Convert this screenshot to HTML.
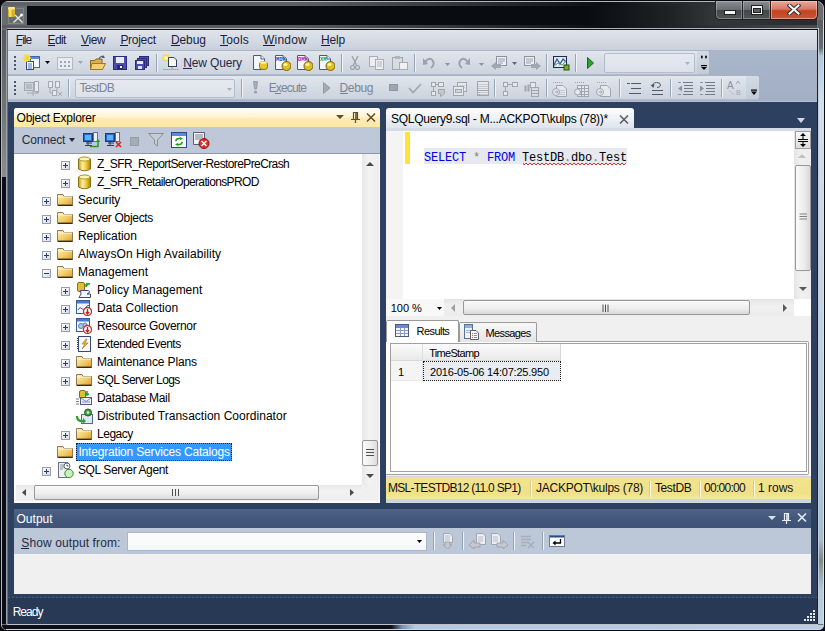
<!DOCTYPE html><html><head><meta charset="utf-8"><style>
html,body{margin:0;padding:0;}
body{width:825px;height:631px;overflow:hidden;position:relative;background:#0b0d12;font-family:"Liberation Sans",sans-serif;}
body div, body span{position:absolute;box-sizing:border-box;}
span{white-space:pre;line-height:1;}
</style></head><body>
<div style="left:0px;top:0px;width:825px;height:631px;background:#06080c;border-radius:8px 8px 6px 6px;"></div>
<div style="left:1px;top:1px;width:823px;height:629px;background:#6a6d70;border-radius:7px 7px 5px 5px;border:1px solid #b4b8bc;"></div>
<div style="left:2px;top:177px;width:4px;height:447px;background:#0b0d1a;"></div>
<div style="left:2px;top:30px;width:4px;height:147px;background:linear-gradient(#55585c,#8a8d90);"></div>
<div style="left:6px;top:30px;width:1px;height:594px;background:#9ca4a8;"></div>
<div style="left:818px;top:20px;width:6px;height:604px;background:linear-gradient(#5a5e63 0,#6a6e72 28px,#b0c8e0 36px,#d0e0f0 80px,#c8d8ea 200px,#b8cce0 400px,#a8bcd0 520px,#7a8c84 540px,#b4c8dc 570px,#bcd0e4);"></div>
<div style="left:818px;top:28px;width:1px;height:596px;background:#c4ccd4;"></div>
<div style="left:823px;top:20px;width:1px;height:604px;background:#d8e0e8;"></div>
<div style="left:824px;top:8px;width:1px;height:618px;background:#0a0c10;"></div>
<div style="left:817px;top:30px;width:1px;height:594px;background:#1a2030;"></div>
<div style="left:2px;top:625px;width:822px;height:5px;background:linear-gradient(90deg,#0b0d1a 0,#0b0d1a 389px,#7890b0 400px,#b4cae2 413px,#b8cce4);border-radius:0 0 5px 5px;"></div>
<div style="left:7px;top:624px;width:811px;height:1px;background:#c0c4c8;"></div>
<div style="left:6px;top:629px;width:813px;height:1px;background:#d0d8e0;"></div>
<div style="left:2px;top:2px;width:815px;height:4px;background:linear-gradient(90deg,#5e6165 0,#5e6165 290px,#0c0e12 600px,#2e3134 700px,#3a3d40 815px);border-radius:6px 0 0 0;"></div>
<div style="left:27px;top:6px;width:790px;height:19px;background:linear-gradient(90deg,#090c11 0,#090c11 560px,#1e2124 640px,#34373a 688px,#2a2d30 790px);"></div>
<div style="left:7px;top:6px;width:20px;height:19px;background:#6a6d70;"></div>
<div style="left:2px;top:25px;width:815px;height:3px;background:linear-gradient(90deg,#5a5e62 0,#5a5e62 290px,#0c0e12 600px,#2a2d30 700px,#4a4d50 815px);"></div>
<div style="left:7px;top:28px;width:811px;height:1px;background:#b0b4b8;"></div>
<div style="left:7px;top:29px;width:811px;height:1px;background:#0e1014;"></div>
<svg style="position:absolute;left:7px;top:6px;" width="18" height="19" viewBox="0 0 18 19" fill="none"><path d="M1.5 8.5 V17.5 H16.5 V2.5 H9" fill="none" stroke="#a8b0a0" stroke-dasharray="1 1" stroke-width="1" opacity=".8"/>
<rect x="1" y="1" width="7" height="10" rx="1.5" fill="#d8b028"/><rect x="1" y="1" width="7" height="2.5" rx="1.2" fill="#f4e890"/><rect x="2" y="3" width="2.5" height="8" fill="#f8e878" opacity=".8"/>
<path d="M6.5 16.5 L15 8.5 M8 9 L15.5 16.5" stroke="#e8ecec" stroke-width="1.2"/><circle cx="14.5" cy="9" r="1.4" fill="#fff"/></svg>
<div style="left:715px;top:1px;width:28px;height:19px;background:linear-gradient(#8a8e92,#6a6e72 48%,#44484c 52%,#50555a);border:1px solid #1e2124;border-top:none;border-radius:0 0 0 5px;box-shadow:inset 0 0 0 1px rgba(255,255,255,.28);"></div>
<div style="left:742px;top:1px;width:29px;height:19px;background:linear-gradient(#8a8e92,#6a6e72 48%,#44484c 52%,#50555a);border:1px solid #1e2124;border-top:none;box-shadow:inset 0 0 0 1px rgba(255,255,255,.28);"></div>
<div style="left:770px;top:1px;width:48px;height:19px;background:linear-gradient(#e8a898,#d77a68 45%,#c8401c 55%,#c05a40);border:1px solid #3a1410;border-top:none;border-radius:0 0 5px 0;box-shadow:inset 0 0 0 1px rgba(255,235,225,.45);"></div>
<div style="left:724px;top:10px;width:12px;height:5px;background:#f4f4f4;border:1px solid #202020;"></div>
<div style="left:751px;top:5px;width:12px;height:10px;border:1px solid #202020;background:#f4f4f4;"></div>
<div style="left:753px;top:8px;width:8px;height:5px;background:#5a5e62;border:1px solid #202020;"></div>
<svg style="position:absolute;left:787px;top:4px;" width="14" height="11" viewBox="0 0 14 11" fill="none"><path d="M2.5 1.5 L11.5 9.5 M11.5 1.5 L2.5 9.5" stroke="#303030" stroke-width="4" stroke-linecap="square"/><path d="M2.5 1.5 L11.5 9.5 M11.5 1.5 L2.5 9.5" stroke="#fafafa" stroke-width="2" stroke-linecap="square"/></svg>
<div style="left:8px;top:30px;width:809px;height:20px;background:linear-gradient(#e0e4eb,#d4dae3 55%,#c8d0dc);"></div>
<div style="left:8px;top:50px;width:809px;height:50px;background:linear-gradient(#aab6ca,#a2afc4);"></div>
<div style="left:8px;top:51px;width:701px;height:23px;background:linear-gradient(#e2e6ed,#d6dce5 50%,#cdd4df);border-radius:0 3px 3px 0;"></div>
<div style="left:8px;top:74px;width:701px;height:1px;background:#b0bbcc;"></div>
<div style="left:14px;top:56px;width:2px;height:2px;background:#4a5670;"></div>
<div style="left:14px;top:60px;width:2px;height:2px;background:#4a5670;"></div>
<div style="left:14px;top:64px;width:2px;height:2px;background:#4a5670;"></div>
<div style="left:14px;top:68px;width:2px;height:2px;background:#4a5670;"></div>
<div style="left:8px;top:76px;width:751px;height:23px;background:linear-gradient(#e2e6ed,#d6dce5 50%,#cdd4df);border-radius:0 3px 3px 0;"></div>
<div style="left:8px;top:99px;width:751px;height:1px;background:#b0bbcc;"></div>
<div style="left:14px;top:81px;width:2px;height:2px;background:#4a5670;"></div>
<div style="left:14px;top:85px;width:2px;height:2px;background:#4a5670;"></div>
<div style="left:14px;top:89px;width:2px;height:2px;background:#4a5670;"></div>
<div style="left:14px;top:93px;width:2px;height:2px;background:#4a5670;"></div>
<div style="left:8px;top:100px;width:809px;height:2px;background:linear-gradient(#a8b2c6 50%,#b4bcd4 50%);"></div>
<div style="left:8px;top:102px;width:809px;height:521px;background:#2e4060;"></div>
<span style="left:15.80px;top:34px;font-size:12px;font-family:'Liberation Sans', sans-serif;color:#1b1d3a;letter-spacing:-0.967px;">File</span>
<div style="left:15.80px;top:45px;width:6.4px;height:1px;background:#1b1d3a"></div>
<span style="left:47.50px;top:34px;font-size:12px;font-family:'Liberation Sans', sans-serif;color:#1b1d3a;letter-spacing:-0.600px;">Edit</span>
<div style="left:47.50px;top:45px;width:7.4px;height:1px;background:#1b1d3a"></div>
<span style="left:81.00px;top:34px;font-size:12px;font-family:'Liberation Sans', sans-serif;color:#1b1d3a;letter-spacing:-0.400px;">View</span>
<div style="left:81.00px;top:45px;width:7.6px;height:1px;background:#1b1d3a"></div>
<span style="left:120.40px;top:34px;font-size:12px;font-family:'Liberation Sans', sans-serif;color:#1b1d3a;letter-spacing:-0.283px;">Project</span>
<div style="left:120.40px;top:45px;width:7.7px;height:1px;background:#1b1d3a"></div>
<span style="left:171.00px;top:34px;font-size:12px;font-family:'Liberation Sans', sans-serif;color:#1b1d3a;letter-spacing:-0.125px;">Debug</span>
<div style="left:171.00px;top:45px;width:8.5px;height:1px;background:#1b1d3a"></div>
<span style="left:220.00px;top:34px;font-size:12px;font-family:'Liberation Sans', sans-serif;color:#1b1d3a;letter-spacing:0.200px;">Tools</span>
<div style="left:220.00px;top:45px;width:7.5px;height:1px;background:#1b1d3a"></div>
<span style="left:263.00px;top:34px;font-size:12px;font-family:'Liberation Sans', sans-serif;color:#1b1d3a;letter-spacing:0.200px;">Window</span>
<div style="left:263.00px;top:45px;width:11.5px;height:1px;background:#1b1d3a"></div>
<span style="left:321.00px;top:34px;font-size:12px;font-family:'Liberation Sans', sans-serif;color:#1b1d3a;letter-spacing:-0.167px;">Help</span>
<div style="left:321.00px;top:45px;width:8.5px;height:1px;background:#1b1d3a"></div>
<svg style="position:absolute;left:23px;top:54px;" width="18" height="17" viewBox="0 0 18 17" fill="none"><rect x="7.5" y="2.5" width="9" height="11" fill="#f4f8fc" stroke="#3c64b0"/><rect x="8" y="3" width="8" height="2" fill="#5a8ad8"/>
<rect x="3.5" y="7.5" width="7" height="8" fill="#fff" stroke="#304a88"/><path d="M5 10h4M5 12h4M5 14h4" stroke="#4a6ab8"/>
<path d="M4 0 L4 8 M0 4 L8 4 M1 1 L7 7 M7 1 L1 7" stroke="#f8d830" stroke-width="1.4"/></svg>
<svg style="position:absolute;left:45px;top:61px;" width="5" height="3" viewBox="0 0 5 3" fill="none"><path d="M0 0 H5 L2.5 3 Z" fill="#000"/></svg>
<svg style="position:absolute;left:57px;top:57px;" width="16" height="13" viewBox="0 0 16 13" fill="none"><rect x="0.5" y="0.5" width="15" height="12" fill="#e8ebf0" stroke="#b4bac4"/><g fill="#a0a6b0"><rect x="3" y="4" width="2" height="2"/><rect x="7" y="4" width="2" height="2"/><rect x="11" y="4" width="2" height="2"/><rect x="3" y="8" width="2" height="2"/><rect x="7" y="8" width="2" height="2"/><rect x="11" y="8" width="2" height="2"/></g></svg>
<svg style="position:absolute;left:78px;top:61px;" width="5" height="3" viewBox="0 0 5 3" fill="none"><path d="M0 0 H5 L2.5 3 Z" fill="#a0a8b4"/></svg>
<svg style="position:absolute;left:90px;top:55px;" width="16" height="16" viewBox="0 0 16 16" fill="none"><path d="M0.5 5.5 H5 L6 4 H12 V14.5 H0.5 Z" fill="#d8b050" stroke="#8a6a20"/><path d="M2 8.5 H15.5 L12.5 14.5 H0.5 Z" fill="#f4d070" stroke="#9a7a28"/>
<path d="M9 4 Q11 0 14 2" stroke="#4a5a80" fill="none" stroke-width="1.3"/><path d="M13 0 L15 3 L12 3 Z" fill="#4a5a80"/></svg>
<svg style="position:absolute;left:113px;top:56px;" width="14" height="14" viewBox="0 0 14 14" fill="none"><rect x="0.5" y="0.5" width="13" height="13" fill="#4c4cb0" stroke="#2a2a78"/><rect x="3" y="1" width="8" height="6" fill="#e8ecf4"/><rect x="4" y="9" width="6" height="4" fill="#2a2a60"/><rect x="7" y="10" width="2" height="2" fill="#fff"/></svg>
<svg style="position:absolute;left:135px;top:56px;" width="14" height="14" viewBox="0 0 14 14" fill="none"><rect x="4.5" y="0.5" width="9" height="9" fill="#5050b8" stroke="#2a2a78"/><rect x="2.5" y="2.5" width="9" height="9" fill="#5050b8" stroke="#2a2a78"/><rect x="0.5" y="4.5" width="9" height="9" fill="#4c4cb0" stroke="#2a2a78"/><rect x="2" y="5" width="6" height="3" fill="#e8ecf4"/><rect x="3" y="10" width="4" height="3" fill="#dfe4f0"/></svg>
<div style="left:156px;top:54px;width:1px;height:18px;background:#97a3b6;"></div>
<div style="left:157px;top:54px;width:1px;height:18px;background:#f2f4f8;"></div>
<svg style="position:absolute;left:162px;top:54px;" width="17" height="17" viewBox="0 0 17 17" fill="none"><path d="M4 0 L4 8 M0 4 L8 4 M1 1 L7 7 M7 1 L1 7" stroke="#f8d830" stroke-width="1.5"/><circle cx="4" cy="4" r="2" fill="#fff8b0"/>
<path d="M6.5 3.5 H12 L14.5 6 V12.5 H6.5 Z" fill="#f8f8fc" stroke="#30405a"/><path d="M6 12.5 H15" stroke="#30405a"/><path d="M10 13 V15" stroke="#d09020"/><path d="M1 15.5 H17" stroke="#d89830" stroke-dasharray="1.5 .5"/></svg>
<span style="left:183.30px;top:57px;font-size:12px;font-family:'Liberation Sans', sans-serif;color:#1e2b45;letter-spacing:-0.150px;">New Query</span>
<div style="left:183.30px;top:68px;width:8.5px;height:1px;background:#1e2b45"></div>
<svg style="position:absolute;left:253px;top:55px;" width="16" height="16" viewBox="0 0 16 16" fill="none"><path d="M0.5 0.5 H8 L11.5 4 V14.5 H0.5 Z" fill="#f4f6fa" stroke="#4a5a78"/><path d="M8 0.5 V4 H11.5" fill="#fff" stroke="#4a5a78"/><rect x="6.5" y="6.5" width="8" height="8" rx="3" fill="#e8c830" stroke="#8a7018"/><ellipse cx="10.5" cy="7.5" rx="3.5" ry="1.3" fill="#fff0a0"/></svg>
<svg style="position:absolute;left:275px;top:55px;" width="16" height="16" viewBox="0 0 16 16" fill="none"><path d="M0.5 0.5 H8 L11.5 4 V14.5 H0.5 Z" fill="#f4f6fa" stroke="#4a5a78"/><path d="M8 0.5 V4 H11.5" fill="#fff" stroke="#4a5a78"/><text x="1" y="6" font-size="5.5" font-family="Liberation Mono" font-weight="bold" fill="#2050c0">MDX</text><ellipse cx="11.5" cy="11" rx="4.5" ry="4.5" fill="#e0c020" stroke="#7a6010"/><ellipse cx="10.5" cy="9.5" rx="2" ry="1.5" fill="#fff6a0"/></svg>
<svg style="position:absolute;left:297px;top:55px;" width="16" height="16" viewBox="0 0 16 16" fill="none"><path d="M0.5 0.5 H8 L11.5 4 V14.5 H0.5 Z" fill="#f4f6fa" stroke="#4a5a78"/><path d="M8 0.5 V4 H11.5" fill="#fff" stroke="#4a5a78"/><text x="1" y="6" font-size="5.5" font-family="Liberation Mono" font-weight="bold" fill="#c020b0">DMX</text><ellipse cx="11.5" cy="11" rx="4.5" ry="4.5" fill="#e0c020" stroke="#7a6010"/><ellipse cx="10.5" cy="9.5" rx="2" ry="1.5" fill="#fff6a0"/></svg>
<svg style="position:absolute;left:319px;top:55px;" width="16" height="16" viewBox="0 0 16 16" fill="none"><path d="M0.5 0.5 H8 L11.5 4 V14.5 H0.5 Z" fill="#f4f6fa" stroke="#4a5a78"/><path d="M8 0.5 V4 H11.5" fill="#fff" stroke="#4a5a78"/><text x="1" y="6" font-size="5.5" font-family="Liberation Mono" font-weight="bold" fill="#20a050">XM</text><ellipse cx="11.5" cy="11" rx="4.5" ry="4.5" fill="#e0c020" stroke="#7a6010"/><ellipse cx="10.5" cy="9.5" rx="2" ry="1.5" fill="#fff6a0"/></svg>
<div style="left:341px;top:54px;width:1px;height:18px;background:#97a3b6;"></div>
<div style="left:342px;top:54px;width:1px;height:18px;background:#f2f4f8;"></div>
<svg style="position:absolute;left:350px;top:56px;" width="10" height="14" viewBox="0 0 10 14" fill="none"><path d="M2 0 L7 10 M8 0 L3 10" stroke="#9aa0aa" stroke-width="1.3"/><circle cx="2.5" cy="11.5" r="2" fill="none" stroke="#9aa0aa" stroke-width="1.2"/><circle cx="7.5" cy="11.5" r="2" fill="none" stroke="#9aa0aa" stroke-width="1.2"/></svg>
<svg style="position:absolute;left:369px;top:56px;" width="16" height="14" viewBox="0 0 16 14" fill="none"><rect x="0.5" y="0.5" width="8" height="10" fill="#eceef2" stroke="#a8aeb8"/><rect x="6.5" y="3.5" width="8" height="10" fill="#eceef2" stroke="#a8aeb8"/><path d="M8 6h5M8 8h5M8 10h5" stroke="#b0b6c0"/></svg>
<svg style="position:absolute;left:392px;top:56px;" width="16" height="14" viewBox="0 0 16 14" fill="none"><rect x="0.5" y="1.5" width="10" height="12" fill="#d8dbe0" stroke="#a0a6b0"/><rect x="3" y="0" width="5" height="3" fill="#b0b6c0"/><rect x="7.5" y="6.5" width="8" height="7" fill="#eef0f4" stroke="#a8aeb8"/></svg>
<div style="left:414px;top:54px;width:1px;height:18px;background:#97a3b6;"></div>
<div style="left:415px;top:54px;width:1px;height:18px;background:#f2f4f8;"></div>
<svg style="position:absolute;left:423px;top:57px;" width="13" height="12" viewBox="0 0 13 12" fill="none"><path d="M2 5 Q7 -1 10 4 Q12 8 8 11" fill="none" stroke="#9aa2ae" stroke-width="2"/><path d="M0 1 L5 7 L0 8 Z" fill="#9aa2ae"/></svg>
<svg style="position:absolute;left:445px;top:63px;" width="5" height="3" viewBox="0 0 5 3" fill="none"><path d="M0 0 H5 L2.5 3 Z" fill="#8a92a0"/></svg>
<svg style="position:absolute;left:458px;top:57px;" width="12" height="12" viewBox="0 0 12 12" fill="none"><path d="M10 5 Q5 -1 2 4 Q0 8 4 11" fill="none" stroke="#9aa2ae" stroke-width="2"/><path d="M12 1 L7 7 L12 8 Z" fill="#9aa2ae"/></svg>
<svg style="position:absolute;left:479px;top:63px;" width="5" height="3" viewBox="0 0 5 3" fill="none"><path d="M0 0 H5 L2.5 3 Z" fill="#8a92a0"/></svg>
<svg style="position:absolute;left:491px;top:56px;" width="17" height="14" viewBox="0 0 17 14" fill="none"><rect x="5.5" y="0.5" width="10" height="9" fill="#eef0f4" stroke="#8a92a0"/><path d="M7 3h7M7 5h7M7 7h5" stroke="#9aa2ae"/><path d="M0 10 L5 6 V8 H10 V12 H5 V14 Z" fill="#a0a8b4"/></svg>
<svg style="position:absolute;left:512px;top:62px;" width="5" height="3" viewBox="0 0 5 3" fill="none"><path d="M0 0 H5 L2.5 3 Z" fill="#606878"/></svg>
<svg style="position:absolute;left:524px;top:56px;" width="17" height="14" viewBox="0 0 17 14" fill="none"><rect x="0.5" y="0.5" width="10" height="9" fill="#eef0f4" stroke="#8a92a0"/><path d="M2 3h7M2 5h7M2 7h5" stroke="#9aa2ae"/><path d="M17 10 L12 6 V8 H7 V12 H12 V14 Z" fill="#a0a8b4"/></svg>
<div style="left:546px;top:54px;width:1px;height:18px;background:#97a3b6;"></div>
<div style="left:547px;top:54px;width:1px;height:18px;background:#f2f4f8;"></div>
<svg style="position:absolute;left:553px;top:56px;" width="17" height="15" viewBox="0 0 17 15" fill="none"><rect x="0.5" y="0.5" width="13" height="11" fill="#d8e4f4" stroke="#1a2a50"/><path d="M1 4h12M1 7h12M4 1v10M8 1v10" stroke="#fff" stroke-width=".6"/><path d="M1 9 L4 3 L7 8 L10 3 L13 6" stroke="#3050a0" fill="none" stroke-width="1.2"/><path d="M1 10 L5 7 L9 9 L13 5" stroke="#60a060" fill="none"/><rect x="11" y="9" width="5" height="5" fill="#70b030" stroke="#305010"/></svg>
<div style="left:575px;top:54px;width:1px;height:18px;background:#97a3b6;"></div>
<div style="left:576px;top:54px;width:1px;height:18px;background:#f2f4f8;"></div>
<svg style="position:absolute;left:587px;top:57px;" width="7" height="12" viewBox="0 0 7 12" fill="none"><path d="M0.5 0.5 L6.5 6 L0.5 11.5 Z" fill="#30a030" stroke="#1a6a1a"/></svg>
<div style="left:604px;top:53px;width:91px;height:20px;background:linear-gradient(#e6e9ef,#dde2ea);border:1px solid #b4bdcc;border-radius:2px;"></div>
<svg style="position:absolute;left:685px;top:62px;" width="5" height="3" viewBox="0 0 5 3" fill="none"><path d="M0 0 H5 L2.5 3 Z" fill="#a8b0bc"/></svg>
<div style="left:697px;top:51px;width:12px;height:23px;background:linear-gradient(#d4dbe5,#c2cbd9);border-radius:0 3px 3px 0;"></div>
<svg style="position:absolute;left:698px;top:54px;" width="12" height="17" viewBox="0 0 12 17" fill="none"><rect x="3" y="1.5" width="1.6" height="3" rx=".8" fill="#000"/><rect x="7.2" y="1.5" width="1.6" height="3" rx=".8" fill="#000"/><rect x="3" y="11" width="6" height="1.2" fill="#000"/><path d="M3 13 H9 L6 16 Z" fill="#000"/></svg>
<svg style="position:absolute;left:24px;top:81px;" width="17" height="16" viewBox="0 0 17 16" fill="none"><rect x="0.5" y="1.5" width="9" height="8" fill="#d0d4da" stroke="#a4aab4"/><rect x="2" y="3" width="6" height="5" fill="#b4bac4"/><rect x="10.5" y="0.5" width="4" height="10" fill="#e8eaee" stroke="#a4aab4"/><path d="M3 12 H15 M9 10 V15 M12 13 L14 11" stroke="#a4aab4"/></svg>
<svg style="position:absolute;left:46px;top:81px;" width="17" height="16" viewBox="0 0 17 16" fill="none"><rect x="2.5" y="0.5" width="4" height="6" fill="#e8eaee" stroke="#a4aab4"/><rect x="9.5" y="0.5" width="4" height="6" fill="#e8eaee" stroke="#a4aab4"/><path d="M4 7 V12 H8 M11 7 V10" stroke="#a4aab4"/><rect x="6.5" y="9.5" width="4" height="5" fill="#e8eaee" stroke="#a4aab4"/><path d="M12 11 L16 15 M16 11 L12 15" stroke="#a4aab4"/></svg>
<div style="left:68px;top:79px;width:1px;height:18px;background:#97a3b6;"></div>
<div style="left:69px;top:79px;width:1px;height:18px;background:#f2f4f8;"></div>
<div style="left:75px;top:79px;width:160px;height:19px;background:linear-gradient(#e6e9ef,#dde2ea);border:1px solid #b4bdcc;border-radius:2px;"></div>
<svg style="position:absolute;left:227px;top:88px;" width="5" height="3" viewBox="0 0 5 3" fill="none"><path d="M0 0 H5 L2.5 3 Z" fill="#a8b0bc"/></svg>
<span style="left:79.60px;top:82px;font-size:12px;font-family:'Liberation Sans', sans-serif;color:#7c8596;letter-spacing:-0.720px;">TestDB</span>
<div style="left:241px;top:79px;width:1px;height:18px;background:#97a3b6;"></div>
<div style="left:242px;top:79px;width:1px;height:18px;background:#f2f4f8;"></div>
<svg style="position:absolute;left:252px;top:81px;" width="7" height="13" viewBox="0 0 7 13" fill="none"><path d="M1.5 0.5 H5.5 L4.5 8 H2.5 Z" fill="#a8aeb8" stroke="#98a0aa"/><circle cx="3.5" cy="11" r="1.6" fill="#98a0aa"/></svg>
<span style="left:268.70px;top:82px;font-size:12px;font-family:'Liberation Sans', sans-serif;color:#7c8596;letter-spacing:-0.867px;">Execute</span>
<div style="left:275px;top:93px;width:6px;height:1px;background:#7c8596"></div>
<svg style="position:absolute;left:323px;top:82px;" width="8" height="12" viewBox="0 0 8 12" fill="none"><path d="M0.5 0.5 L7 6 L0.5 11.5 Z" fill="#a4aab4" stroke="#949aa6"/></svg>
<span style="left:339.60px;top:82px;font-size:12px;font-family:'Liberation Sans', sans-serif;color:#7c8596;letter-spacing:-0.400px;">Debug</span>
<div style="left:339.60px;top:93px;width:8.3px;height:1px;background:#7c8596"></div>
<div style="left:389px;top:84px;width:9px;height:7px;background:#a0a6b0;border:1px solid #9098a4;"></div>
<svg style="position:absolute;left:408px;top:83px;" width="14" height="11" viewBox="0 0 14 11" fill="none"><path d="M1 5 L5 9.5 L13 1" stroke="#a0a6b0" stroke-width="1.6" fill="none"/></svg>
<svg style="position:absolute;left:430px;top:81px;" width="17" height="16" viewBox="0 0 17 16" fill="none"><rect x="1.5" y="1.5" width="4" height="4" fill="#e6e8ec" stroke="#a0a6b0"/><rect x="8.5" y="1.5" width="5" height="4" fill="#e6e8ec" stroke="#a0a6b0"/><rect x="1.5" y="10.5" width="4" height="4" fill="#e6e8ec" stroke="#a0a6b0"/><path d="M3.5 6v4M6 3.5h2" stroke="#a0a6b0"/><path d="M8.5 8.5 H14.5 V12.5 L10.5 15.5 V12.5 H8.5 Z" fill="#c4c8d0" stroke="#a0a6b0"/></svg>
<svg style="position:absolute;left:452px;top:81px;" width="17" height="16" viewBox="0 0 17 16" fill="none"><rect x="5.5" y="1.5" width="9" height="9" fill="#e6e8ec" stroke="#a0a6b0"/><path d="M7 4.5h6M7 6.5h6" stroke="#c8ccd4"/><rect x="1.5" y="5.5" width="10" height="9" fill="#e6e8ec" stroke="#a0a6b0"/><rect x="3.5" y="8.5" width="6" height="3" fill="#d4d8de" stroke="#a0a6b0"/></svg>
<svg style="position:absolute;left:476px;top:81px;" width="17" height="16" viewBox="0 0 17 16" fill="none"><rect x="1.5" y=".5" width="11" height="14" fill="#e6e8ec" stroke="#a0a6b0"/><path d="M2 3.5h10M2 5.5h10M2 7.5h10M2 9.5h10M2 11.5h10M2 13.5h10" stroke="#c4c8d0"/><path d="M2 9.5h10" stroke="#a0a6b0"/><path d="M3 11.5h1M3 13.5h1" stroke="#a0a6b0"/></svg>
<div style="left:494px;top:79px;width:1px;height:18px;background:#97a3b6;"></div>
<div style="left:495px;top:79px;width:1px;height:18px;background:#f2f4f8;"></div>
<svg style="position:absolute;left:502px;top:81px;" width="17" height="16" viewBox="0 0 17 16" fill="none"><rect x="1.5" y="1.5" width="4" height="4" fill="#e6e8ec" stroke="#a0a6b0"/><rect x="10.5" y="1.5" width="5" height="4" fill="#e6e8ec" stroke="#a0a6b0"/><rect x="1.5" y="10.5" width="4" height="4" fill="#e6e8ec" stroke="#a0a6b0"/><path d="M3.5 6v4M6 3.5h4" stroke="#a0a6b0"/></svg>
<svg style="position:absolute;left:523px;top:81px;" width="17" height="16" viewBox="0 0 17 16" fill="none"><rect x="1.5" y="4.5" width="2" height="6" fill="#a0a6b0"/><rect x="4.5" y="3.5" width="2" height="7" fill="#a0a6b0"/><rect x="7.5" y="1.5" width="5" height="5" fill="#e6e8ec" stroke="#a0a6b0"/><rect x="8.5" y="6.5" width="7" height="9" fill="#d8dce2" stroke="#a0a6b0"/><path d="M9 9.5h6M9 12.5h6" stroke="#a0a6b0"/></svg>
<div style="left:546px;top:79px;width:1px;height:18px;background:#97a3b6;"></div>
<div style="left:547px;top:79px;width:1px;height:18px;background:#f2f4f8;"></div>
<svg style="position:absolute;left:552px;top:81px;" width="17" height="16" viewBox="0 0 17 16" fill="none"><path d="M1 1.5h1M3 1.5h1M5 1.5h1M7 1.5h1M9 1.5h1" stroke="#a0a6b0"/><path d="M4.5 4.5 H11 L14.5 8 V15.5 H4.5 Z" fill="#e6e8ec" stroke="#a0a6b0"/><path d="M6 9.5h7M6 11.5h7M6 13.5h7" stroke="#c4c8d0"/><circle cx="4" cy="11" r="3.5" fill="#e6e8ec" stroke="#a0a6b0"/><path d="M2.5 11 H5.5 M4.5 9.5 L6 11 L4.5 12.5" stroke="#a0a6b0" fill="none"/></svg>
<svg style="position:absolute;left:574px;top:81px;" width="17" height="16" viewBox="0 0 17 16" fill="none"><path d="M1 1.5h1M3 1.5h1M5 1.5h1M7 1.5h1M9 1.5h1" stroke="#a0a6b0"/><rect x="3.5" y="4.5" width="11" height="11" fill="#e6e8ec" stroke="#a0a6b0"/><path d="M4 7.5h10M4 10.5h10M4 13.5h10M7.5 5v10M10.5 5v10" stroke="#a0a6b0"/><circle cx="3.5" cy="11" r="3" fill="#e6e8ec" stroke="#a0a6b0"/></svg>
<svg style="position:absolute;left:596px;top:81px;" width="17" height="16" viewBox="0 0 17 16" fill="none"><path d="M1 1.5h1M3 1.5h1M5 1.5h1M7 1.5h1M9 1.5h1" stroke="#a0a6b0"/><path d="M4.5 4.5 H11 L14.5 8 V15.5 H4.5 Z" fill="#e6e8ec" stroke="#a0a6b0"/><circle cx="4" cy="11" r="3.5" fill="#e6e8ec" stroke="#a0a6b0"/><path d="M2.5 11 H5.5 M4.5 9.5 L6 11 L4.5 12.5" stroke="#a0a6b0" fill="none"/></svg>
<div style="left:619px;top:79px;width:1px;height:18px;background:#97a3b6;"></div>
<div style="left:620px;top:79px;width:1px;height:18px;background:#f2f4f8;"></div>
<svg style="position:absolute;left:626px;top:81px;" width="17" height="16" viewBox="0 0 17 16" fill="none"><path d="M1 2.5h3M5 2.5h10M5 7.5h10M3 12.5h12" stroke="#505a6a"/></svg>
<svg style="position:absolute;left:649px;top:81px;" width="17" height="16" viewBox="0 0 17 16" fill="none"><path d="M4 6 Q3 1.5 7.5 1.5 Q11.5 1.5 11.5 4 Q11.5 6.5 8 6.5" fill="none" stroke="#505a6a"/><path d="M1.5 4 L4.5 7 L5.5 3Z" fill="#505a6a"/><path d="M3 9.5h11M3 13.5h11" stroke="#505a6a"/></svg>
<div style="left:670px;top:79px;width:1px;height:18px;background:#97a3b6;"></div>
<div style="left:671px;top:79px;width:1px;height:18px;background:#f2f4f8;"></div>
<svg style="position:absolute;left:677px;top:81px;" width="17" height="16" viewBox="0 0 17 16" fill="none"><path d="M6 1.5h10M7 4.5h9M7 7.5h9M7 10.5h9M6 13.5h10" stroke="#707a8a" stroke-width="1.2"/><path d="M1 1.5h3M1 13.5h3" stroke="#8a94a4"/><path d="M1 7.5 L5 4.5 V10.5Z" fill="#8a94a4"/></svg>
<svg style="position:absolute;left:699px;top:81px;" width="17" height="16" viewBox="0 0 17 16" fill="none"><path d="M6 1.5h10M7 4.5h9M7 7.5h9M7 10.5h9M6 13.5h10" stroke="#707a8a" stroke-width="1.2"/><path d="M1 1.5h3M1 13.5h3" stroke="#8a94a4"/><path d="M5 7.5 L1 4.5 V10.5Z" fill="#8a94a4"/></svg>
<div style="left:721px;top:79px;width:1px;height:18px;background:#97a3b6;"></div>
<div style="left:722px;top:79px;width:1px;height:18px;background:#f2f4f8;"></div>
<svg style="position:absolute;left:727px;top:80px;" width="17" height="16" viewBox="0 0 17 16" fill="none"><text x="0" y="9" font-size="10" fill="#8a92a0" font-family="Liberation Sans">A</text><path d="M9 4 L11 1 L13 4" stroke="#a0a6b0" fill="none"/><text x="9" y="15" font-size="7" fill="#a0a6b0" font-family="Liberation Sans">B</text><path d="M3 11 Q4 14 8 14" stroke="#a0a6b0" fill="none" stroke-dasharray="1 1"/></svg>
<div style="left:746px;top:76px;width:13px;height:23px;background:linear-gradient(#d4dbe5,#c2cbd9);border-radius:0 3px 3px 0;"></div>
<svg style="position:absolute;left:750px;top:88px;" width="8" height="9" viewBox="0 0 8 9" fill="none"><rect x="1" y="1.5" width="6" height="1.2" fill="#000"/><path d="M1 3.5 H7 L4 7 Z" fill="#000"/></svg>
<div style="left:14px;top:108px;width:366px;height:395px;background:#fdfdfd;border-radius:3px 3px 0 0;"></div>
<div style="left:14px;top:127px;width:366px;height:26px;background:#bec8d8;"></div>
<div style="left:14px;top:153px;width:366px;height:1px;background:#8e98a8;"></div>
<div style="left:14px;top:108px;width:366px;height:19px;background:linear-gradient(#fffdf6,#fff5d6 45%,#ffeab0 55%,#ffe8a8);border-radius:3px 3px 0 0;"></div>
<span style="left:16.60px;top:112px;font-size:12px;font-family:'Liberation Sans', sans-serif;color:#000;letter-spacing:-0.257px;">Object Explorer</span>
<svg style="position:absolute;left:336px;top:115px;" width="8" height="4" viewBox="0 0 8 4" fill="none"><path d="M0 0 H8 L4 4 Z" fill="#5a502a"/></svg>
<svg style="position:absolute;left:351px;top:112px;" width="9" height="11" viewBox="0 0 9 11" fill="none"><path d="M2.5 .5 H6.5 V7.5 H2.5 Z" fill="none" stroke="#5a502a" stroke-width="1.2"/><path d="M5 1 V7" stroke="#5a502a" stroke-width="1.6"/><path d="M0 7.5 H9 M4.5 8 V11" stroke="#5a502a" stroke-width="1.2"/></svg>
<svg style="position:absolute;left:366px;top:113px;" width="10" height="9" viewBox="0 0 10 9" fill="none"><path d="M1 .5 L9 8.5 M9 .5 L1 8.5" stroke="#5a502a" stroke-width="1.5"/></svg>
<span style="left:21.80px;top:134px;font-size:12px;font-family:'Liberation Sans', sans-serif;color:#1e2b45;letter-spacing:-0.200px;">Connect</span>
<svg style="position:absolute;left:69px;top:138px;" width="6" height="4" viewBox="0 0 6 4" fill="none"><path d="M0 0 H6 L3 4 Z" fill="#1e2b45"/></svg>
<svg style="position:absolute;left:83px;top:132px;" width="17" height="16" viewBox="0 0 17 16" fill="none"><rect x=".5" y="1.5" width="9" height="8" fill="#1e6ad0" stroke="#1a3a80"/><rect x="2" y="3" width="6" height="5" fill="#60b0ff"/><rect x="10.5" y=".5" width="4" height="9" fill="#f0f0f4" stroke="#6a7080"/><path d="M3 11 H9 M5 10 V13 M2 13.5 H9" stroke="#303848"/><path d="M7 14.5 H15 V9" stroke="#20a020" stroke-width="1.5" fill="none"/><path d="M12.5 10 L15 7 L17.5 10 Z" fill="#20a020"/></svg>
<svg style="position:absolute;left:105px;top:132px;" width="17" height="16" viewBox="0 0 17 16" fill="none"><rect x=".5" y="1.5" width="9" height="8" fill="#1e6ad0" stroke="#1a3a80"/><rect x="2" y="3" width="6" height="5" fill="#60b0ff"/><rect x="10.5" y=".5" width="4" height="9" fill="#f0f0f4" stroke="#6a7080"/><path d="M3 11 H9 M5 10 V13 M2 13.5 H9" stroke="#303848"/><path d="M11 10 L16 15 M16 10 L11 15" stroke="#e02020" stroke-width="1.6"/></svg>
<div style="left:130px;top:137px;width:9px;height:9px;background:#a6acb6;border:1px solid #969ca6;"></div>
<svg style="position:absolute;left:148px;top:133px;" width="16" height="14" viewBox="0 0 16 14" fill="none"><path d="M0.5 .5 H15.5 L9.5 7 V13 L6.5 11 V7 Z" fill="#c8ccd4" stroke="#8a909a"/></svg>
<svg style="position:absolute;left:171px;top:132px;" width="16" height="16" viewBox="0 0 16 16" fill="none"><rect x=".5" y=".5" width="15" height="15" fill="#fff" stroke="#2a4a90"/><rect x="1" y="1" width="14" height="3" fill="#5a8ad8"/><path d="M4 9 Q5 5 9 6 L8 4.5 L12 6.5 L8.5 8.5 L9 7 Q6 7 5.5 9.5 Z" fill="#20a020"/><path d="M12 10 Q11 14 7 13 L8 14.5 L4 12.5 L7.5 10.5 L7 12 Q10 12 10.5 9.5Z" fill="#20a020"/></svg>
<svg style="position:absolute;left:193px;top:132px;" width="17" height="17" viewBox="0 0 17 17" fill="none"><path d="M.5 .5 H11.5 V12.5 H.5 Z" fill="#f4f4f8" stroke="#5a6070"/><path d="M2 3h8M2 5h8M2 7h6" stroke="#7a8090"/><circle cx="11" cy="11.5" r="5" fill="#e03030" stroke="#901010"/><path d="M8.5 9 L13.5 14 M13.5 9 L8.5 14" stroke="#fff" stroke-width="1.4"/></svg>
<div style="left:15px;top:154px;width:347px;height:330px;background:#fff;"></div>
<div style="left:362px;top:154px;width:17px;height:331px;background:linear-gradient(90deg,#e8e8e8,#f2f2f2 40%,#eeeeee);"></div>
<svg style="position:absolute;left:366px;top:162px;" width="8" height="4" viewBox="0 0 8 4" fill="none"><path d="M4 0 L8 4 H0 Z" fill="#4a4a4a"/></svg>
<div style="left:362px;top:440px;width:16px;height:26px;background:linear-gradient(90deg,#fafafa,#ececec 60%,#dcdcdc);border:1px solid #989898;border-radius:2px;"></div>
<svg style="position:absolute;left:366px;top:449px;" width="8" height="8" viewBox="0 0 8 8" fill="none"><path d="M0 .5 H8 M0 3.5 H8 M0 6.5 H8" stroke="#505050"/></svg>
<svg style="position:absolute;left:366px;top:474px;" width="8" height="4" viewBox="0 0 8 4" fill="none"><path d="M0 0 H8 L4 4 Z" fill="#4a4a4a"/></svg>
<div style="left:16px;top:485px;width:346px;height:16px;background:linear-gradient(#e8e8e8,#f2f2f2 40%,#eeeeee);"></div>
<svg style="position:absolute;left:22px;top:489px;" width="4" height="7" viewBox="0 0 4 7" fill="none"><path d="M4 0 V7 L0 3.5 Z" fill="#4a4a4a"/></svg>
<div style="left:34px;top:485px;width:285px;height:15px;background:linear-gradient(#fafafa,#ececec 60%,#dcdcdc);border:1px solid #989898;border-radius:2px;"></div>
<svg style="position:absolute;left:172px;top:489px;" width="8" height="7" viewBox="0 0 8 7" fill="none"><path d="M.5 0 V7 M3.5 0 V7 M6.5 0 V7" stroke="#505050"/></svg>
<svg style="position:absolute;left:350px;top:489px;" width="4" height="7" viewBox="0 0 4 7" fill="none"><path d="M0 0 V7 L4 3.5 Z" fill="#4a4a4a"/></svg>
<div style="left:362px;top:485px;width:17px;height:16px;background:#f0f0f0;"></div>
<div style="left:61px;top:161px;width:9px;height:9px;background:linear-gradient(135deg,#fdfdfd,#d6dae2);border:1px solid #9a9eae;"></div>
<div style="left:63px;top:165px;width:5px;height:1px;background:#2c3c68;"></div>
<div style="left:65px;top:163px;width:1px;height:5px;background:#2c3c68;"></div>
<svg style="position:absolute;left:78px;top:156px;" width="13" height="16" viewBox="0 0 13 16" fill="none"><defs><linearGradient id="dg" x1="0" x2="1"><stop offset="0" stop-color="#c8a018"/><stop offset=".35" stop-color="#fff0a0"/><stop offset=".7" stop-color="#e8c030"/><stop offset="1" stop-color="#a88010"/></linearGradient></defs><path d="M.5 3 Q6.5 -.5 12.5 3 V13 Q6.5 16.5 .5 13 Z" fill="url(#dg)" stroke="#8a7010"/><ellipse cx="6.5" cy="3" rx="5.6" ry="2" fill="#fff4b0" stroke="#a08818" stroke-width=".8"/></svg>
<span style="left:97.00px;top:158px;font-size:12px;font-family:'Liberation Sans', sans-serif;color:#000;letter-spacing:-0.606px;">Z_SFR_ReportServer-RestorePreCrash</span>
<div style="left:61px;top:179px;width:9px;height:9px;background:linear-gradient(135deg,#fdfdfd,#d6dae2);border:1px solid #9a9eae;"></div>
<div style="left:63px;top:183px;width:5px;height:1px;background:#2c3c68;"></div>
<div style="left:65px;top:181px;width:1px;height:5px;background:#2c3c68;"></div>
<svg style="position:absolute;left:78px;top:174px;" width="13" height="16" viewBox="0 0 13 16" fill="none"><defs><linearGradient id="dg" x1="0" x2="1"><stop offset="0" stop-color="#c8a018"/><stop offset=".35" stop-color="#fff0a0"/><stop offset=".7" stop-color="#e8c030"/><stop offset="1" stop-color="#a88010"/></linearGradient></defs><path d="M.5 3 Q6.5 -.5 12.5 3 V13 Q6.5 16.5 .5 13 Z" fill="url(#dg)" stroke="#8a7010"/><ellipse cx="6.5" cy="3" rx="5.6" ry="2" fill="#fff4b0" stroke="#a08818" stroke-width=".8"/></svg>
<span style="left:97.00px;top:176px;font-size:12px;font-family:'Liberation Sans', sans-serif;color:#000;letter-spacing:-0.630px;">Z_SFR_RetailerOperationsPROD</span>
<div style="left:42px;top:197px;width:9px;height:9px;background:linear-gradient(135deg,#fdfdfd,#d6dae2);border:1px solid #9a9eae;"></div>
<div style="left:44px;top:201px;width:5px;height:1px;background:#2c3c68;"></div>
<div style="left:46px;top:199px;width:1px;height:5px;background:#2c3c68;"></div>
<svg style="position:absolute;left:57px;top:194px;" width="16" height="13" viewBox="0 0 16 13" fill="none"><defs><linearGradient id="fg" x1="0" y1="0" x2="1" y2="1"><stop offset="0" stop-color="#fdf0b8"/><stop offset=".55" stop-color="#f2cc68"/><stop offset="1" stop-color="#e09a30"/></linearGradient></defs><path d="M.5 2.5 V.5 H6 L7 2.5 H15.5 V11.5 H.5 Z" fill="url(#fg)" stroke="#8a7a5a"/><path d="M1 11.3 H15.5" stroke="#3a2a10" stroke-width="1.4"/><path d="M1 3 H15" stroke="#fff6d8"/></svg>
<span style="left:78.00px;top:194px;font-size:12px;font-family:'Liberation Sans', sans-serif;color:#000;letter-spacing:-0.143px;">Security</span>
<div style="left:42px;top:215px;width:9px;height:9px;background:linear-gradient(135deg,#fdfdfd,#d6dae2);border:1px solid #9a9eae;"></div>
<div style="left:44px;top:219px;width:5px;height:1px;background:#2c3c68;"></div>
<div style="left:46px;top:217px;width:1px;height:5px;background:#2c3c68;"></div>
<svg style="position:absolute;left:57px;top:212px;" width="16" height="13" viewBox="0 0 16 13" fill="none"><defs><linearGradient id="fg" x1="0" y1="0" x2="1" y2="1"><stop offset="0" stop-color="#fdf0b8"/><stop offset=".55" stop-color="#f2cc68"/><stop offset="1" stop-color="#e09a30"/></linearGradient></defs><path d="M.5 2.5 V.5 H6 L7 2.5 H15.5 V11.5 H.5 Z" fill="url(#fg)" stroke="#8a7a5a"/><path d="M1 11.3 H15.5" stroke="#3a2a10" stroke-width="1.4"/><path d="M1 3 H15" stroke="#fff6d8"/></svg>
<span style="left:78.00px;top:212px;font-size:12px;font-family:'Liberation Sans', sans-serif;color:#000;letter-spacing:-0.308px;">Server Objects</span>
<div style="left:42px;top:233px;width:9px;height:9px;background:linear-gradient(135deg,#fdfdfd,#d6dae2);border:1px solid #9a9eae;"></div>
<div style="left:44px;top:237px;width:5px;height:1px;background:#2c3c68;"></div>
<div style="left:46px;top:235px;width:1px;height:5px;background:#2c3c68;"></div>
<svg style="position:absolute;left:57px;top:230px;" width="16" height="13" viewBox="0 0 16 13" fill="none"><defs><linearGradient id="fg" x1="0" y1="0" x2="1" y2="1"><stop offset="0" stop-color="#fdf0b8"/><stop offset=".55" stop-color="#f2cc68"/><stop offset="1" stop-color="#e09a30"/></linearGradient></defs><path d="M.5 2.5 V.5 H6 L7 2.5 H15.5 V11.5 H.5 Z" fill="url(#fg)" stroke="#8a7a5a"/><path d="M1 11.3 H15.5" stroke="#3a2a10" stroke-width="1.4"/><path d="M1 3 H15" stroke="#fff6d8"/></svg>
<span style="left:78.00px;top:230px;font-size:12px;font-family:'Liberation Sans', sans-serif;color:#000;letter-spacing:-0.050px;">Replication</span>
<div style="left:42px;top:251px;width:9px;height:9px;background:linear-gradient(135deg,#fdfdfd,#d6dae2);border:1px solid #9a9eae;"></div>
<div style="left:44px;top:255px;width:5px;height:1px;background:#2c3c68;"></div>
<div style="left:46px;top:253px;width:1px;height:5px;background:#2c3c68;"></div>
<svg style="position:absolute;left:57px;top:248px;" width="16" height="13" viewBox="0 0 16 13" fill="none"><defs><linearGradient id="fg" x1="0" y1="0" x2="1" y2="1"><stop offset="0" stop-color="#fdf0b8"/><stop offset=".55" stop-color="#f2cc68"/><stop offset="1" stop-color="#e09a30"/></linearGradient></defs><path d="M.5 2.5 V.5 H6 L7 2.5 H15.5 V11.5 H.5 Z" fill="url(#fg)" stroke="#8a7a5a"/><path d="M1 11.3 H15.5" stroke="#3a2a10" stroke-width="1.4"/><path d="M1 3 H15" stroke="#fff6d8"/></svg>
<span style="left:78.00px;top:248px;font-size:12px;font-family:'Liberation Sans', sans-serif;color:#000;letter-spacing:0.076px;">AlwaysOn High Availability</span>
<div style="left:42px;top:269px;width:9px;height:9px;background:linear-gradient(135deg,#fdfdfd,#d6dae2);border:1px solid #9a9eae;"></div>
<div style="left:44px;top:273px;width:5px;height:1px;background:#2c3c68;"></div>
<svg style="position:absolute;left:57px;top:266px;" width="16" height="13" viewBox="0 0 16 13" fill="none"><defs><linearGradient id="fg" x1="0" y1="0" x2="1" y2="1"><stop offset="0" stop-color="#fdf0b8"/><stop offset=".55" stop-color="#f2cc68"/><stop offset="1" stop-color="#e09a30"/></linearGradient></defs><path d="M.5 2.5 V.5 H6 L7 2.5 H15.5 V11.5 H.5 Z" fill="url(#fg)" stroke="#8a7a5a"/><path d="M1 11.3 H15.5" stroke="#3a2a10" stroke-width="1.4"/><path d="M1 3 H15" stroke="#fff6d8"/></svg>
<span style="left:78.00px;top:266px;font-size:12px;font-family:'Liberation Sans', sans-serif;color:#000;letter-spacing:0.000px;">Management</span>
<div style="left:61px;top:287px;width:9px;height:9px;background:linear-gradient(135deg,#fdfdfd,#d6dae2);border:1px solid #9a9eae;"></div>
<div style="left:63px;top:291px;width:5px;height:1px;background:#2c3c68;"></div>
<div style="left:65px;top:289px;width:1px;height:5px;background:#2c3c68;"></div>
<svg style="position:absolute;left:77px;top:282px;" width="15" height="16" viewBox="0 0 15 16" fill="none"><rect x=".5" y=".5" width="7" height="9" rx="1.5" fill="#e0c030" stroke="#8a7010"/><path d="M9 5 Q9 1 13 2" stroke="#20a030" stroke-width="1.8" fill="none"/><path d="M8 3 L10 .5 L11.5 4 Z" fill="#20a030"/><path d="M3.5 8.5 H11.5 Q13 8.5 12 11 L10 12 H13.5 V15.5 H2 L4 12 Z" fill="#f4f6fa" stroke="#3a4a78"/></svg>
<span style="left:97.00px;top:284px;font-size:12px;font-family:'Liberation Sans', sans-serif;color:#000;letter-spacing:-0.006px;">Policy Management</span>
<div style="left:61px;top:305px;width:9px;height:9px;background:linear-gradient(135deg,#fdfdfd,#d6dae2);border:1px solid #9a9eae;"></div>
<div style="left:63px;top:309px;width:5px;height:1px;background:#2c3c68;"></div>
<div style="left:65px;top:307px;width:1px;height:5px;background:#2c3c68;"></div>
<svg style="position:absolute;left:76px;top:300px;" width="16" height="16" viewBox="0 0 16 16" fill="none"><rect x=".5" y=".5" width="13" height="13" fill="#f4f8fc" stroke="#3a5a98"/><rect x="1" y="1" width="12" height="2.5" fill="#4a7ad0"/><path d="M2 10 Q4 6 6 9 Q8 11 10 7 Q12 4 14 6" stroke="#3060b0" fill="none"/><circle cx="11.5" cy="11.5" r="4" fill="#fff" stroke="#c03030" stroke-width="1.3"/><path d="M11.5 9 V13 M10 12 L11.5 14 L13 12" stroke="#c02020" stroke-width="1.3" fill="none"/></svg>
<span style="left:97.00px;top:302px;font-size:12px;font-family:'Liberation Sans', sans-serif;color:#000;letter-spacing:-0.021px;">Data Collection</span>
<div style="left:61px;top:323px;width:9px;height:9px;background:linear-gradient(135deg,#fdfdfd,#d6dae2);border:1px solid #9a9eae;"></div>
<div style="left:63px;top:327px;width:5px;height:1px;background:#2c3c68;"></div>
<div style="left:65px;top:325px;width:1px;height:5px;background:#2c3c68;"></div>
<svg style="position:absolute;left:76px;top:318px;" width="16" height="16" viewBox="0 0 16 16" fill="none"><rect x=".5" y=".5" width="13" height="13" fill="#f4f8fc" stroke="#3a5a98"/><rect x="1" y="1" width="12" height="2.5" fill="#4a7ad0"/><circle cx="5" cy="8" r="2.5" fill="#b0c8e8" stroke="#6080b0"/><circle cx="9" cy="7" r="2" fill="#b0c8e8" stroke="#6080b0"/><circle cx="11.5" cy="11.5" r="4" fill="#fff" stroke="#c03030" stroke-width="1.3"/><path d="M11.5 9 V13 M10 12 L11.5 14 L13 12" stroke="#c02020" stroke-width="1.3" fill="none"/></svg>
<span style="left:97.00px;top:320px;font-size:12px;font-family:'Liberation Sans', sans-serif;color:#000;letter-spacing:-0.312px;">Resource Governor</span>
<div style="left:61px;top:341px;width:9px;height:9px;background:linear-gradient(135deg,#fdfdfd,#d6dae2);border:1px solid #9a9eae;"></div>
<div style="left:63px;top:345px;width:5px;height:1px;background:#2c3c68;"></div>
<div style="left:65px;top:343px;width:1px;height:5px;background:#2c3c68;"></div>
<svg style="position:absolute;left:77px;top:336px;" width="14" height="16" viewBox="0 0 14 16" fill="none"><rect x="1.5" y=".5" width="12" height="15" fill="#f8f8fc" stroke="#3a4a78"/><path d="M1 2v12" stroke="#3a4a78" stroke-width="2" stroke-dasharray="1 1"/><path d="M9 3 L5 8 H8 L5 13 L11 7 H8 L10 3 Z" fill="#f0c020" stroke="#a07010" stroke-width=".6"/></svg>
<span style="left:97.00px;top:338px;font-size:12px;font-family:'Liberation Sans', sans-serif;color:#000;letter-spacing:-0.464px;">Extended Events</span>
<div style="left:61px;top:359px;width:9px;height:9px;background:linear-gradient(135deg,#fdfdfd,#d6dae2);border:1px solid #9a9eae;"></div>
<div style="left:63px;top:363px;width:5px;height:1px;background:#2c3c68;"></div>
<div style="left:65px;top:361px;width:1px;height:5px;background:#2c3c68;"></div>
<svg style="position:absolute;left:76px;top:356px;" width="16" height="13" viewBox="0 0 16 13" fill="none"><defs><linearGradient id="fg" x1="0" y1="0" x2="1" y2="1"><stop offset="0" stop-color="#fdf0b8"/><stop offset=".55" stop-color="#f2cc68"/><stop offset="1" stop-color="#e09a30"/></linearGradient></defs><path d="M.5 2.5 V.5 H6 L7 2.5 H15.5 V11.5 H.5 Z" fill="url(#fg)" stroke="#8a7a5a"/><path d="M1 11.3 H15.5" stroke="#3a2a10" stroke-width="1.4"/><path d="M1 3 H15" stroke="#fff6d8"/></svg>
<span style="left:97.00px;top:356px;font-size:12px;font-family:'Liberation Sans', sans-serif;color:#000;letter-spacing:-0.125px;">Maintenance Plans</span>
<div style="left:61px;top:377px;width:9px;height:9px;background:linear-gradient(135deg,#fdfdfd,#d6dae2);border:1px solid #9a9eae;"></div>
<div style="left:63px;top:381px;width:5px;height:1px;background:#2c3c68;"></div>
<div style="left:65px;top:379px;width:1px;height:5px;background:#2c3c68;"></div>
<svg style="position:absolute;left:76px;top:374px;" width="16" height="13" viewBox="0 0 16 13" fill="none"><defs><linearGradient id="fg" x1="0" y1="0" x2="1" y2="1"><stop offset="0" stop-color="#fdf0b8"/><stop offset=".55" stop-color="#f2cc68"/><stop offset="1" stop-color="#e09a30"/></linearGradient></defs><path d="M.5 2.5 V.5 H6 L7 2.5 H15.5 V11.5 H.5 Z" fill="url(#fg)" stroke="#8a7a5a"/><path d="M1 11.3 H15.5" stroke="#3a2a10" stroke-width="1.4"/><path d="M1 3 H15" stroke="#fff6d8"/></svg>
<span style="left:97.00px;top:374px;font-size:12px;font-family:'Liberation Sans', sans-serif;color:#000;letter-spacing:-0.593px;">SQL Server Logs</span>
<svg style="position:absolute;left:76px;top:390px;" width="17" height="16" viewBox="0 0 17 16" fill="none"><rect x="3.5" y=".5" width="6" height="8" rx="1.5" fill="#e0c030" stroke="#8a7010"/><path d="M11 1 V5 L13 4 M11 5 L9 4" stroke="#20a030" stroke-width="1.5" fill="none"/><rect x="4.5" y="7.5" width="11" height="7" fill="#eef2f8" stroke="#4a5a80"/><path d="M5 8 L10 11.5 L15 8 M6 12h8" stroke="#7a8ab0"/><path d="M0 9h3M0 11.5h3M0 14h3" stroke="#6a7a98"/></svg>
<span style="left:97.00px;top:392px;font-size:12px;font-family:'Liberation Sans', sans-serif;color:#000;letter-spacing:-0.300px;">Database Mail</span>
<svg style="position:absolute;left:76px;top:408px;" width="17" height="16" viewBox="0 0 17 16" fill="none"><rect x="5.5" y="6.5" width="11" height="9" fill="#dde8f4" stroke="#4a6a98"/><circle cx="12" cy="4.5" r="3.5" fill="#40a040" stroke="#206020"/><circle cx="12" cy="4.5" r="1.3" fill="#d0f0d0"/><path d="M1 8 Q1 14 8 13" stroke="#30a030" stroke-width="2.2" fill="none"/><path d="M7 10 L10 13 L7 16 Z" fill="#30a030"/></svg>
<span style="left:97.00px;top:410px;font-size:12px;font-family:'Liberation Sans', sans-serif;color:#000;letter-spacing:0.026px;">Distributed Transaction Coordinator</span>
<div style="left:61px;top:431px;width:9px;height:9px;background:linear-gradient(135deg,#fdfdfd,#d6dae2);border:1px solid #9a9eae;"></div>
<div style="left:63px;top:435px;width:5px;height:1px;background:#2c3c68;"></div>
<div style="left:65px;top:433px;width:1px;height:5px;background:#2c3c68;"></div>
<svg style="position:absolute;left:76px;top:428px;" width="16" height="13" viewBox="0 0 16 13" fill="none"><defs><linearGradient id="fg" x1="0" y1="0" x2="1" y2="1"><stop offset="0" stop-color="#fdf0b8"/><stop offset=".55" stop-color="#f2cc68"/><stop offset="1" stop-color="#e09a30"/></linearGradient></defs><path d="M.5 2.5 V.5 H6 L7 2.5 H15.5 V11.5 H.5 Z" fill="url(#fg)" stroke="#8a7a5a"/><path d="M1 11.3 H15.5" stroke="#3a2a10" stroke-width="1.4"/><path d="M1 3 H15" stroke="#fff6d8"/></svg>
<span style="left:97.00px;top:428px;font-size:12px;font-family:'Liberation Sans', sans-serif;color:#000;letter-spacing:-0.480px;">Legacy</span>
<svg style="position:absolute;left:57px;top:446px;" width="16" height="13" viewBox="0 0 16 13" fill="none"><defs><linearGradient id="fg" x1="0" y1="0" x2="1" y2="1"><stop offset="0" stop-color="#fdf0b8"/><stop offset=".55" stop-color="#f2cc68"/><stop offset="1" stop-color="#e09a30"/></linearGradient></defs><path d="M.5 2.5 V.5 H6 L7 2.5 H15.5 V11.5 H.5 Z" fill="url(#fg)" stroke="#8a7a5a"/><path d="M1 11.3 H15.5" stroke="#3a2a10" stroke-width="1.4"/><path d="M1 3 H15" stroke="#fff6d8"/></svg>
<div style="left:76px;top:443px;width:156px;height:18px;background:#3399ff;border:1px dotted #0a1a40;"></div>
<span style="left:78.40px;top:446px;font-size:12px;font-family:'Liberation Sans', sans-serif;color:#fff;letter-spacing:-0.182px;">Integration Services Catalogs</span>
<div style="left:42px;top:467px;width:9px;height:9px;background:linear-gradient(135deg,#fdfdfd,#d6dae2);border:1px solid #9a9eae;"></div>
<div style="left:44px;top:471px;width:5px;height:1px;background:#2c3c68;"></div>
<div style="left:46px;top:469px;width:1px;height:5px;background:#2c3c68;"></div>
<svg style="position:absolute;left:58px;top:462px;" width="16" height="16" viewBox="0 0 16 16" fill="none"><rect x=".5" y=".5" width="9" height="15" fill="#eef0f4" stroke="#6a7080"/><path d="M2 3h6M2 5h6M2 7h3" stroke="#8a92a0"/><circle cx="9" cy="4" r="3" fill="#fff" stroke="#5a6070"/><path d="M9 2.5V4H10.5" stroke="#303040" stroke-width=".8" fill="none"/><circle cx="11" cy="11.5" r="4.2" fill="#c8f0b8" stroke="#3a8a3a"/></svg>
<span style="left:78.00px;top:464px;font-size:12px;font-family:'Liberation Sans', sans-serif;color:#000;letter-spacing:-0.400px;">SQL Server Agent</span>
<svg style="position:absolute;left:797px;top:118px;" width="8" height="5" viewBox="0 0 8 5" fill="none"><path d="M0 0 H8 L4 5 Z" fill="#d0d8e4"/></svg>
<div style="left:386px;top:108px;width:248px;height:21px;background:linear-gradient(#fdfdfe,#eef1f5 50%,#dde3eb);border-radius:3px 3px 0 0;"></div>
<span style="left:391.00px;top:113px;font-size:12px;font-family:'Liberation Sans', sans-serif;color:#000;letter-spacing:-0.250px;">SQLQuery9.sql - M...ACKPOT\kulps (78))*</span>
<svg style="position:absolute;left:619px;top:115px;" width="10" height="9" viewBox="0 0 10 9" fill="none"><path d="M1 .5 L9 8.5 M9 .5 L1 8.5" stroke="#5a606c" stroke-width="1.6"/></svg>
<div style="left:386px;top:128px;width:425px;height:3px;background:#d5dce6;"></div>
<div style="left:386px;top:131px;width:425px;height:168px;background:#fff;"></div>
<div style="left:386px;top:131px;width:17px;height:168px;background:#f4f4f4;"></div>
<div style="left:405px;top:132px;width:5px;height:32px;background:#fde43a;"></div>
<div style="left:424px;top:148px;width:203px;height:16px;background:#e6e9ef;"></div>
<span style="left:424px;top:152px;font-size:12px;font-family:&quot;Liberation Mono&quot;,monospace;color:#0000e0;letter-spacing:-0.2px">SELECT</span>
<span style="left:473px;top:152px;font-size:12px;font-family:&quot;Liberation Mono&quot;,monospace;color:#808080;letter-spacing:-0.2px">*</span>
<span style="left:487px;top:152px;font-size:12px;font-family:&quot;Liberation Mono&quot;,monospace;color:#0000e0;letter-spacing:-0.2px">FROM</span>
<span style="left:522px;top:152px;font-size:12px;font-family:&quot;Liberation Mono&quot;,monospace;color:#000;letter-spacing:-0.2px">TestDB</span>
<span style="left:564px;top:152px;font-size:12px;font-family:&quot;Liberation Mono&quot;,monospace;color:#808080;letter-spacing:-0.2px">.</span>
<span style="left:571px;top:152px;font-size:12px;font-family:&quot;Liberation Mono&quot;,monospace;color:#000;letter-spacing:-0.2px">dbo</span>
<span style="left:592px;top:152px;font-size:12px;font-family:&quot;Liberation Mono&quot;,monospace;color:#808080;letter-spacing:-0.2px">.</span>
<span style="left:599px;top:152px;font-size:12px;font-family:&quot;Liberation Mono&quot;,monospace;color:#000;letter-spacing:-0.2px">Test</span>
<svg style="position:absolute;left:523px;top:162px;" width="104" height="4" viewBox="0 0 104 4" fill="none"><path d="M0 1 L1 3 L3 1 L5 3 L7 1 L9 3 L11 1 L13 3 L15 1 L17 3 L19 1 L21 3 L23 1 L25 3 L27 1 L29 3 L31 1 L33 3 L35 1 L37 3 L39 1 L41 3 L43 1 L45 3 L47 1 L49 3 L51 1 L53 3 L55 1 L57 3 L59 1 L61 3 L63 1 L65 3 L67 1 L69 3 L71 1 L73 3 L75 1 L77 3 L79 1 L81 3 L83 1 L85 3 L87 1 L89 3 L91 1 L93 3 L95 1 L97 3 L99 1 L101 3 L103 1" stroke="#e03030" fill="none" stroke-width="1"/></svg>
<div style="left:794px;top:131px;width:17px;height:168px;background:linear-gradient(90deg,#e4e4e4,#f0f0f0 40%,#ececec);"></div>
<div style="left:795px;top:131px;width:16px;height:18px;background:linear-gradient(#f8f8f8,#dcdcdc);border:1px solid #a0a0a0;"></div>
<svg style="position:absolute;left:798px;top:133px;" width="10" height="14" viewBox="0 0 10 14" fill="none"><path d="M0 6.5 H10 M0 8.5 H10" stroke="#000"/><path d="M5 0 L8 3 H2 Z M5 14 L8 11 H2 Z" fill="#000"/><path d="M5 3 V6 M5 9 V11" stroke="#000"/></svg>
<svg style="position:absolute;left:798px;top:154px;" width="8" height="4" viewBox="0 0 8 4" fill="none"><path d="M4 0 L8 4 H0 Z" fill="#c0c0c0"/></svg>
<div style="left:795px;top:165px;width:16px;height:106px;background:linear-gradient(90deg,#fafafa,#ececec 60%,#d8d8d8);border:1px solid #989898;border-radius:2px;"></div>
<svg style="position:absolute;left:799px;top:213px;" width="8" height="8" viewBox="0 0 8 8" fill="none"><path d="M.5 1 H8 M.5 3.5 H8 M.5 6 H8" stroke="#808080"/></svg>
<svg style="position:absolute;left:799px;top:287px;" width="8" height="4" viewBox="0 0 8 4" fill="none"><path d="M0 0 H8 L4 4 Z" fill="#5a5a5a"/></svg>
<div style="left:386px;top:299px;width:58px;height:17px;background:#f8f8f8;"></div>
<span style="left:390.80px;top:303px;font-size:11px;font-family:'Liberation Sans', sans-serif;color:#000;letter-spacing:-0.075px;">100 %</span>
<svg style="position:absolute;left:437px;top:307px;" width="5" height="3" viewBox="0 0 5 3" fill="none"><path d="M0 0 H5 L2.5 3 Z" fill="#000"/></svg>
<div style="left:444px;top:299px;width:350px;height:17px;background:linear-gradient(#e4e4e4,#f0f0f0 40%,#ececec);"></div>
<svg style="position:absolute;left:451px;top:304px;" width="4" height="8" viewBox="0 0 4 8" fill="none"><path d="M4 0 V8 L0 4 Z" fill="#a0a0a0"/></svg>
<div style="left:463px;top:300px;width:287px;height:15px;background:linear-gradient(#fafafa,#ececec 60%,#d8d8d8);border:1px solid #989898;border-radius:2px;"></div>
<svg style="position:absolute;left:602px;top:304px;" width="8" height="8" viewBox="0 0 8 8" fill="none"><path d="M1 .5 V8 M3.5 .5 V8 M6 .5 V8" stroke="#505050"/></svg>
<svg style="position:absolute;left:783px;top:304px;" width="4" height="8" viewBox="0 0 4 8" fill="none"><path d="M0 0 V8 L4 4 Z" fill="#5a5a5a"/></svg>
<div style="left:794px;top:299px;width:17px;height:17px;background:#fff;"></div>
<div style="left:386px;top:316px;width:425px;height:160px;background:#f0f0f0;"></div>
<div style="left:809px;top:341px;width:2px;height:135px;background:#f8f8f8;"></div>
<div style="left:386px;top:341px;width:423px;height:134px;background:#fff;border-top:1px solid #a0a0a0;border-right:1px solid #a0a0a0;border-bottom:1px solid #a0a0a0;border-radius:0 2px 2px 0;"></div>
<div style="left:459px;top:322px;width:78px;height:20px;background:linear-gradient(#f8f8f8,#e4e4e4);border:1px solid #9a9a9a;border-bottom:none;border-radius:2px 2px 0 0;"></div>
<div style="left:386px;top:320px;width:73px;height:22px;background:#fff;border:1px solid #9a9a9a;border-bottom:none;border-radius:2px 2px 0 0;"></div>
<svg style="position:absolute;left:395px;top:324px;" width="14" height="13" viewBox="0 0 14 13" fill="none"><rect x=".5" y=".5" width="13" height="12" fill="#f4f6fa" stroke="#4a5a88"/><rect x="1" y="1" width="12" height="3" fill="#6a8ad0"/><path d="M1 6.5h12M1 9.5h12M5.5 4v8M9.5 4v8" stroke="#8a9ac0"/></svg>
<span style="left:416.60px;top:326px;font-size:11px;font-family:'Liberation Sans', sans-serif;color:#000;letter-spacing:-0.567px;">Results</span>
<svg style="position:absolute;left:464px;top:324px;" width="15" height="16" viewBox="0 0 15 16" fill="none"><rect x=".5" y=".5" width="8" height="14" fill="#eef4fa" stroke="#5a7090"/><rect x="1" y="1" width="7" height="3" fill="#8ab0e0"/><path d="M2 6.5h5M2 8.5h5" stroke="#a0b4d0"/><path d="M6.5 6.5 H12 L14.5 9 V15.5 H6.5 Z" fill="#fff" stroke="#5a6070"/><path d="M8 9.5h1M8 11.5h1M8 13.5h1" stroke="#d05030"/><path d="M10 9.5h3M10 11.5h3M10 13.5h3" stroke="#8a92a0"/></svg>
<span style="left:485.60px;top:328px;font-size:11px;font-family:'Liberation Sans', sans-serif;color:#000;letter-spacing:-0.643px;">Messages</span>
<div style="left:390px;top:343px;width:417px;height:129px;background:#fff;border:1px solid #a0a0a0;"></div>
<div style="left:391px;top:344px;width:170px;height:17px;background:linear-gradient(#fbfbfb,#f2f2f2 50%,#e8e8e8);"></div>
<div style="left:391px;top:360px;width:170px;height:1px;background:#d8d8d8;"></div>
<div style="left:422px;top:344px;width:1px;height:37px;background:#e0e0e0;"></div>
<div style="left:560px;top:344px;width:1px;height:37px;background:#d8d8d8;"></div>
<div style="left:391px;top:380px;width:170px;height:1px;background:#e8e8e8;"></div>
<div style="left:391px;top:361px;width:31px;height:19px;background:#f4f4f4;"></div>
<span style="left:429.20px;top:348px;font-size:11px;font-family:'Liberation Sans', sans-serif;color:#000;letter-spacing:-0.688px;">TimeStamp</span>
<div style="left:423px;top:361px;width:138px;height:20px;background:#e9edf1;border:1px dotted #202020;"></div>
<span style="left:398.00px;top:367px;font-size:11px;font-family:'Liberation Sans', sans-serif;color:#000;letter-spacing:0.000px;">1</span>
<span style="left:430.00px;top:367px;font-size:11px;font-family:'Liberation Sans', sans-serif;color:#000;letter-spacing:-0.205px;">2016-05-06 14:07:25.950</span>
<div style="left:386px;top:476px;width:425px;height:27px;background:#cdd4e4;"></div>
<div style="left:386px;top:477px;width:425px;height:22px;background:linear-gradient(#f2e48e,#f0e088 75%,#f4e7a0);"></div>
<span style="left:388.00px;top:482px;font-size:12px;font-family:'Liberation Sans', sans-serif;color:#101010;letter-spacing:-0.727px;">MSL-TESTDB12 (11.0 SP1)</span>
<div style="left:530px;top:481px;width:1px;height:16px;background:#d8cc90;"></div>
<div style="left:531px;top:481px;width:1px;height:16px;background:#fffbe8;"></div>
<span style="left:536.00px;top:482px;font-size:12px;font-family:'Liberation Sans', sans-serif;color:#101010;letter-spacing:-0.235px;">JACKPOT\kulps (78)</span>
<div style="left:649px;top:481px;width:1px;height:16px;background:#d8cc90;"></div>
<div style="left:650px;top:481px;width:1px;height:16px;background:#fffbe8;"></div>
<span style="left:655.00px;top:482px;font-size:12px;font-family:'Liberation Sans', sans-serif;color:#101010;letter-spacing:-0.400px;">TestDB</span>
<div style="left:699px;top:481px;width:1px;height:16px;background:#d8cc90;"></div>
<div style="left:700px;top:481px;width:1px;height:16px;background:#fffbe8;"></div>
<span style="left:704.00px;top:482px;font-size:12px;font-family:'Liberation Sans', sans-serif;color:#101010;letter-spacing:-0.714px;">00:00:00</span>
<div style="left:753px;top:481px;width:1px;height:16px;background:#d8cc90;"></div>
<div style="left:754px;top:481px;width:1px;height:16px;background:#fffbe8;"></div>
<span style="left:758.00px;top:482px;font-size:12px;font-family:'Liberation Sans', sans-serif;color:#101010;letter-spacing:0.000px;">1 rows</span>
<div style="left:14px;top:509px;width:797px;height:19px;background:linear-gradient(#4f6385,#43577b 50%,#3d5277);"></div>
<span style="left:16.50px;top:513px;font-size:12px;font-family:'Liberation Sans', sans-serif;color:#fff;letter-spacing:0.020px;">Output</span>
<svg style="position:absolute;left:768px;top:516px;" width="8" height="4" viewBox="0 0 8 4" fill="none"><path d="M0 0 H8 L4 4 Z" fill="#d8e0ec"/></svg>
<svg style="position:absolute;left:782px;top:513px;" width="9" height="11" viewBox="0 0 9 11" fill="none"><path d="M2.5 .5 H6.5 V7.5 H2.5 Z" fill="none" stroke="#e8eef6" stroke-width="1.2"/><path d="M5 1 V7" stroke="#e8eef6" stroke-width="1.6"/><path d="M0 7.5 H9 M4.5 8 V11" stroke="#e8eef6" stroke-width="1.2"/></svg>
<svg style="position:absolute;left:797px;top:513px;" width="10" height="9" viewBox="0 0 10 9" fill="none"><path d="M1 .5 L9 8.5 M9 .5 L1 8.5" stroke="#e8eef6" stroke-width="1.5"/></svg>
<div style="left:14px;top:528px;width:797px;height:26px;background:#bcc7d8;"></div>
<span style="left:21.30px;top:537px;font-size:12px;font-family:'Liberation Sans', sans-serif;color:#1e2b45;letter-spacing:0.106px;">Show output from:</span>
<div style="left:21.30px;top:548px;width:8.1px;height:1px;background:#1e2b45"></div>
<div style="left:127px;top:532px;width:300px;height:19px;background:linear-gradient(#fdfdfe,#f4f6f9);border:1px solid #a9b5c8;"></div>
<svg style="position:absolute;left:417px;top:540px;" width="5" height="3" viewBox="0 0 5 3" fill="none"><path d="M0 0 H5 L2.5 3 Z" fill="#000"/></svg>
<div style="left:433px;top:532px;width:1px;height:18px;background:#97a3b6;"></div>
<div style="left:434px;top:532px;width:1px;height:18px;background:#eef1f5;"></div>
<div style="left:462px;top:532px;width:1px;height:18px;background:#97a3b6;"></div>
<div style="left:463px;top:532px;width:1px;height:18px;background:#eef1f5;"></div>
<div style="left:513px;top:532px;width:1px;height:18px;background:#97a3b6;"></div>
<div style="left:514px;top:532px;width:1px;height:18px;background:#eef1f5;"></div>
<div style="left:542px;top:532px;width:1px;height:18px;background:#97a3b6;"></div>
<div style="left:543px;top:532px;width:1px;height:18px;background:#eef1f5;"></div>
<svg style="position:absolute;left:441px;top:533px;" width="13" height="16" viewBox="0 0 13 16" fill="none"><path d="M2.5 .5 H9 L11.5 3 V9.5 H2.5 Z" fill="#eceef2" stroke="#a0a6b0"/><path d="M4 3h5M4 5h5M4 7h5" stroke="#b8bcc4"/><path d="M4 9 H9 V12 H11 L6.5 16 L2 12 H4 Z" fill="#c4c8d0" stroke="#a0a6b0"/></svg>
<svg style="position:absolute;left:469px;top:533px;" width="18" height="16" viewBox="0 0 18 16" fill="none"><path d="M7.5 .5 H14 L16.5 3 V11.5 H7.5 Z" fill="#eceef2" stroke="#a0a6b0"/><path d="M9 4h5M9 6h5M9 8h5" stroke="#b8bcc4"/><path d="M0 12 L5 7 V10 H11 V14 H5 V16 Z" fill="#c4c8d0" stroke="#a0a6b0"/></svg>
<svg style="position:absolute;left:491px;top:533px;" width="17" height="16" viewBox="0 0 17 16" fill="none"><path d="M.5 .5 H7 L9.5 3 V11.5 H.5 Z" fill="#eceef2" stroke="#a0a6b0"/><path d="M2 4h5M2 6h5M2 8h5" stroke="#b8bcc4"/><path d="M17 12 L12 7 V10 H6 V14 H12 V16 Z" fill="#c4c8d0" stroke="#a0a6b0"/></svg>
<svg style="position:absolute;left:520px;top:535px;" width="16" height="14" viewBox="0 0 16 14" fill="none"><path d="M1 1.5h10M1 4.5h10M1 7.5h7M1 10.5h5" stroke="#a8aeb8" stroke-width="1.3"/><path d="M8 7 L14 13 M14 7 L8 13" stroke="#a8aeb8" stroke-width="1.6"/></svg>
<svg style="position:absolute;left:549px;top:535px;" width="16" height="12" viewBox="0 0 16 12" fill="none"><rect x=".5" y=".5" width="15" height="11" fill="#fff" stroke="#6a7a98"/><rect x="1" y="1" width="14" height="1.5" fill="#2a4a90"/><path d="M11.5 4 V8 H5" stroke="#000" fill="none" stroke-width="1.3"/><path d="M3.5 8 L6.5 5.5 V10.5 Z" fill="#000"/></svg>
<div style="left:14px;top:554px;width:797px;height:40px;background:#f0f0f0;"></div>
<div style="left:8px;top:597px;width:809px;height:1px;background:repeating-linear-gradient(90deg,#46587a 0 2px,#2e405f 2px 4px);"></div>
<div style="left:8px;top:598px;width:809px;height:26px;background:#283956;"></div>
<span style="left:12.70px;top:606px;font-size:12px;font-family:'Liberation Sans', sans-serif;color:#fff;letter-spacing:-1.000px;">Ready</span>
<div style="left:813px;top:610px;width:2px;height:2px;background:#e0e8f0;"></div>
<div style="left:810px;top:613px;width:2px;height:2px;background:#e0e8f0;"></div>
<div style="left:813px;top:613px;width:2px;height:2px;background:#e0e8f0;"></div>
<div style="left:807px;top:616px;width:2px;height:2px;background:#e0e8f0;"></div>
<div style="left:810px;top:616px;width:2px;height:2px;background:#e0e8f0;"></div>
<div style="left:813px;top:616px;width:2px;height:2px;background:#e0e8f0;"></div>
<div style="left:804px;top:619px;width:2px;height:2px;background:#e0e8f0;"></div>
<div style="left:807px;top:619px;width:2px;height:2px;background:#e0e8f0;"></div>
<div style="left:810px;top:619px;width:2px;height:2px;background:#e0e8f0;"></div>
<div style="left:813px;top:619px;width:2px;height:2px;background:#e0e8f0;"></div>
</body></html>
